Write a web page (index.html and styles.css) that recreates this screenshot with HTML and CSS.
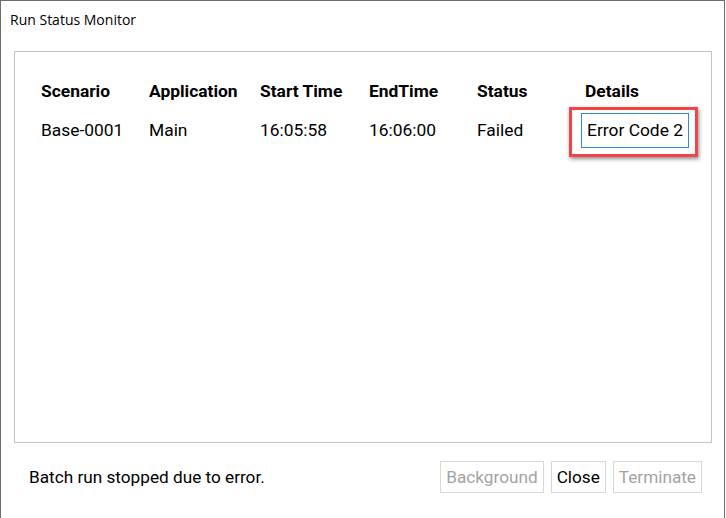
FILE: index.html
```html
<!DOCTYPE html>
<html>
<head>
<meta charset="utf-8">
<link rel="stylesheet" href="styles.css">
</head>
<body>
<div class="window">
  <div class="title">Run Status Monitor</div>
  <div class="panel">
    <div class="table">
      <div class="th">Scenario</div>
      <div class="th">Application</div>
      <div class="th">Start Time</div>
      <div class="th">EndTime</div>
      <div class="th">Status</div>
      <div class="th">Details</div>
      <div class="td">Base-0001</div>
      <div class="td">Main</div>
      <div class="td">16:05:58</div>
      <div class="td">16:06:00</div>
      <div class="td">Failed</div>
      <div class="td detail-cell">
        <div class="highlight"></div>
        <div class="detail-box">Error Code 2</div>
      </div>
    </div>
  </div>
  <div class="footer">
    <div class="message">Batch run stopped due to error.</div>
    <div class="buttons">
      <div class="btn disabled">Background</div>
      <div class="btn">Close</div>
      <div class="btn disabled">Terminate</div>
    </div>
  </div>
</div>
</body>
</html>
```
FILE: styles.css
```css
html, body {
  margin: 0;
  padding: 0;
  background: #ffffff;
}
.window {
  width: 725px;
  height: 518px;
  border-top: 1px solid #6e6e6e;
  border-left: 1px solid #6e6e6e;
  border-right: 1px solid #6e6e6e;
  box-sizing: border-box;
  background: #ffffff;
  font-family: Roboto, "Liberation Sans", sans-serif;
  color: #000;
}
.title {
  font-family: "Segoe UI", "Open Sans", "Noto Sans", sans-serif;
  font-size: 14px;
  height: 50px;
  box-sizing: border-box;
  padding: 9px 0 0 9px;
  line-height: 20px;
  color: #000;
}
.panel {
  margin-left: 13px;
  width: 698px;
  height: 392px;
  border: 1px solid #c4c4c4;
  box-sizing: border-box;
}
.table {
  display: grid;
  grid-template-columns: 108px 111px 109px 108px 108px 120px;
  grid-template-rows: 40px 38px;
  padding: 19px 0 0 26px;
  font-size: 17.4px;
}
.th {
  font-weight: bold;
  line-height: 40px;
}
.td {
  line-height: 38px;
}
.detail-cell {
  position: relative;
}
.detail-box {
  position: absolute;
  left: -4px;
  top: 2px;
  width: 108px;
  height: 35px;
  box-sizing: border-box;
  border: 1px solid #2b8fd0;
  line-height: 33px;
  padding-left: 5px;
  white-space: nowrap;
}
.highlight {
  position: absolute;
  left: -16px;
  top: -4px;
  width: 129px;
  height: 50px;
  box-sizing: border-box;
  border: 3px solid #f04448;
  box-shadow: 1px 2px 4px rgba(0,0,0,0.45);
}
.footer {
  display: flex;
  align-items: center;
  justify-content: space-between;
  padding: 18px 22px 0 28px;
  font-size: 17.2px;
}
.message {
  line-height: 32px;
}
.buttons {
  display: flex;
  gap: 7px;
}
.btn {
  border: 1px solid #d8d8d8;
  height: 32px;
  box-sizing: border-box;
  line-height: 30px;
  padding: 0 5px;
  color: #000;
}
.btn.disabled {
  color: #a3a3a3;
}
```
